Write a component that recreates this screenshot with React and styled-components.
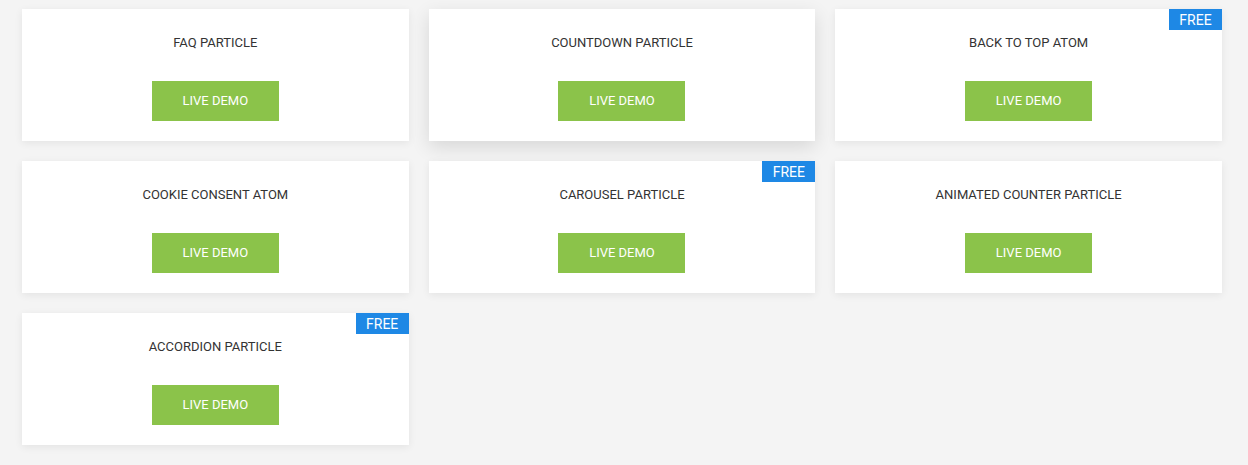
import styled, { createGlobalStyle } from "styled-components";

const GlobalStyle = createGlobalStyle`
  html, body {
    margin: 0;
    padding: 0;
    background: #f4f4f4;
    font-family: Roboto, "Liberation Sans", Arial, sans-serif;
  }
`;

const Page = styled.div`
  padding: 9px 0 20px 22px;
`;

const Grid = styled.div`
  width: 1200px;
  display: grid;
  grid-template-columns: repeat(3, 1fr);
  gap: 20px;
`;

const Card = styled.div`
  position: relative;
  background: #fff;
  height: 132px;
  box-sizing: border-box;
  padding-top: 25px;
  display: flex;
  flex-direction: column;
  align-items: center;
  box-shadow: ${(p) =>
    p.$hover
      ? "0 6px 18px rgba(0, 0, 0, 0.12)"
      : "0 2px 8px rgba(0, 0, 0, 0.07)"};
`;

const Title = styled.h3`
  margin: 0;
  font-size: 13px;
  line-height: 18px;
  font-weight: 400;
  color: #333;
  text-transform: uppercase;
`;

const DemoButton = styled.a`
  margin-top: 29px;
  width: 127px;
  height: 40px;
  box-sizing: border-box;
  padding-bottom: 1px;
  display: flex;
  align-items: center;
  justify-content: center;
  background: #8bc34a;
  color: #fff;
  font-size: 13px;
  line-height: 1;
  text-decoration: none;
  text-transform: uppercase;
`;

const Badge = styled.span`
  position: absolute;
  top: 0;
  right: 0;
  height: 21px;
  width: 53px;
  display: flex;
  align-items: center;
  justify-content: center;
  background: #1e88e5;
  color: #fff;
  font-size: 14px;
`;

const items = [
  { title: "FAQ Particle" },
  { title: "Countdown Particle", hover: true },
  { title: "Back To Top Atom", free: true },
  { title: "Cookie Consent Atom" },
  { title: "Carousel Particle", free: true },
  { title: "Animated Counter Particle" },
  { title: "Accordion Particle", free: true },
];

export default function App() {
  return (
    <>
      <GlobalStyle />
      <Page>
        <Grid>
          {items.map((item) => (
            <Card key={item.title} $hover={item.hover}>
              {item.free && <Badge>FREE</Badge>}
              <Title>{item.title}</Title>
              <DemoButton href="#">Live Demo</DemoButton>
            </Card>
          ))}
        </Grid>
      </Page>
    </>
  );
}
